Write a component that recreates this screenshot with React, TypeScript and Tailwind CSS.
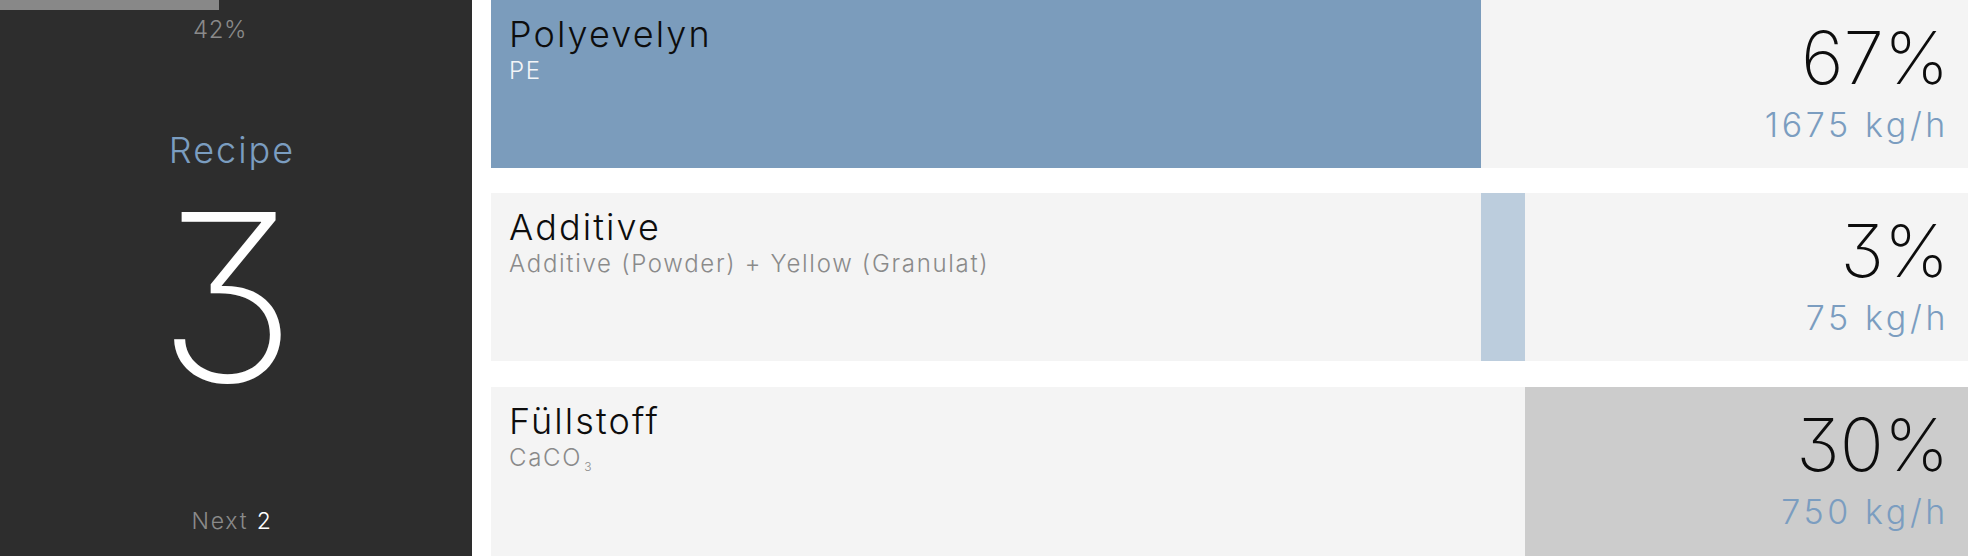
import React from "react";

type Row = {
  title: string;
  sub: React.ReactNode;
  start: number;
  pct: number;
  barClass: string;
  subClass: string;
  rate: string;
  rowClass: string;
};

const rows: Row[] = [
  {
    title: "Polyevelyn",
    sub: "PE",
    start: 0,
    pct: 67,
    barClass: "bg-[#7b9cbc]",
    subClass: "text-[#f3f5f8]",
    rate: "1675 kg/h",
    rowClass: "h-[168px]",
  },
  {
    title: "Additive",
    sub: "Additive (Powder) + Yellow (Granulat)",
    start: 67,
    pct: 3,
    barClass: "bg-[#bccddd]",
    subClass: "text-[#8a8a8a]",
    rate: "75 kg/h",
    rowClass: "h-[168px] mt-[25px]",
  },
  {
    title: "Füllstoff",
    sub: (
      <>
        CaCO<sub className="ml-[2px] text-[12px] relative top-[5px] align-baseline">3</sub>
      </>
    ),
    start: 70,
    pct: 30,
    barClass: "bg-[#cccccc]",
    subClass: "text-[#8a8a8a]",
    rate: "750 kg/h",
    rowClass: "flex-1 mt-[26px]",
  },
];

const font = "font-['Inter','Liberation_Sans',sans-serif]";

export default function App() {
  return (
    <div className={`w-[1968px] h-[556px] flex bg-white overflow-hidden ${font}`}>
      {/* Sidebar */}
      <div className="w-[472px] shrink-0 bg-[#2d2d2d] flex flex-col">
        <div className="h-[10px] w-[219px] bg-[#888888]" />
        <div className="w-[440px] mt-[8px] text-center text-[24px] leading-none font-[300] text-[#8a8a8a] tracking-[0.5px]">
          42%
        </div>
        <div className="pr-[8px] flex flex-col items-center">
          <div className="mt-[90px] text-[36px] leading-none font-[350] text-[#7b9dc0] tracking-[2px]">
            Recipe
          </div>
          <div className="mt-[12px] mr-[10px] text-[234px] leading-none font-[235] text-white [font-feature-settings:'cv09']">
            3
          </div>
          <div className="mt-[96px] text-[23px] leading-none font-[350] tracking-[1.8px]">
            <span className="text-[#8a8a8a]">Next</span>{" "}
            <span className="text-white">2</span>
          </div>
        </div>
      </div>

      {/* Main */}
      <div className="flex-1 pl-[19px] flex flex-col">
        {rows.map((r) => (
          <div key={r.title} className={`relative bg-[#f4f4f4] ${r.rowClass}`}>
            <div
              className={`absolute top-0 bottom-0 ${r.barClass}`}
              style={{ left: `${r.start}%`, width: `${r.pct}%` }}
            />
            <div className="relative h-full flex justify-between">
              <div className="pl-[18px] pt-[16px]">
                <div className="text-[36px] leading-none font-[350] text-[#0d0d0d] tracking-[2.1px]">
                  {r.title}
                </div>
                <div className={`mt-[7px] text-[24px] leading-none font-[350] tracking-[1.7px] ${r.subClass}`}>
                  {r.sub}
                </div>
              </div>
              <div className="pr-[19px] pb-[6px] flex flex-col items-end justify-center">
                <div className="text-[73px] leading-none font-[220] text-[#0d0d0d] [font-feature-settings:'cv09']">
                  {r.pct}%
                </div>
                <div className="mt-[14px] text-[34px] leading-none font-[350] text-[#7b9dc0] tracking-[3.6px] mr-[0px]">
                  {r.rate}
                </div>
              </div>
            </div>
          </div>
        ))}
      </div>
    </div>
  );
}
